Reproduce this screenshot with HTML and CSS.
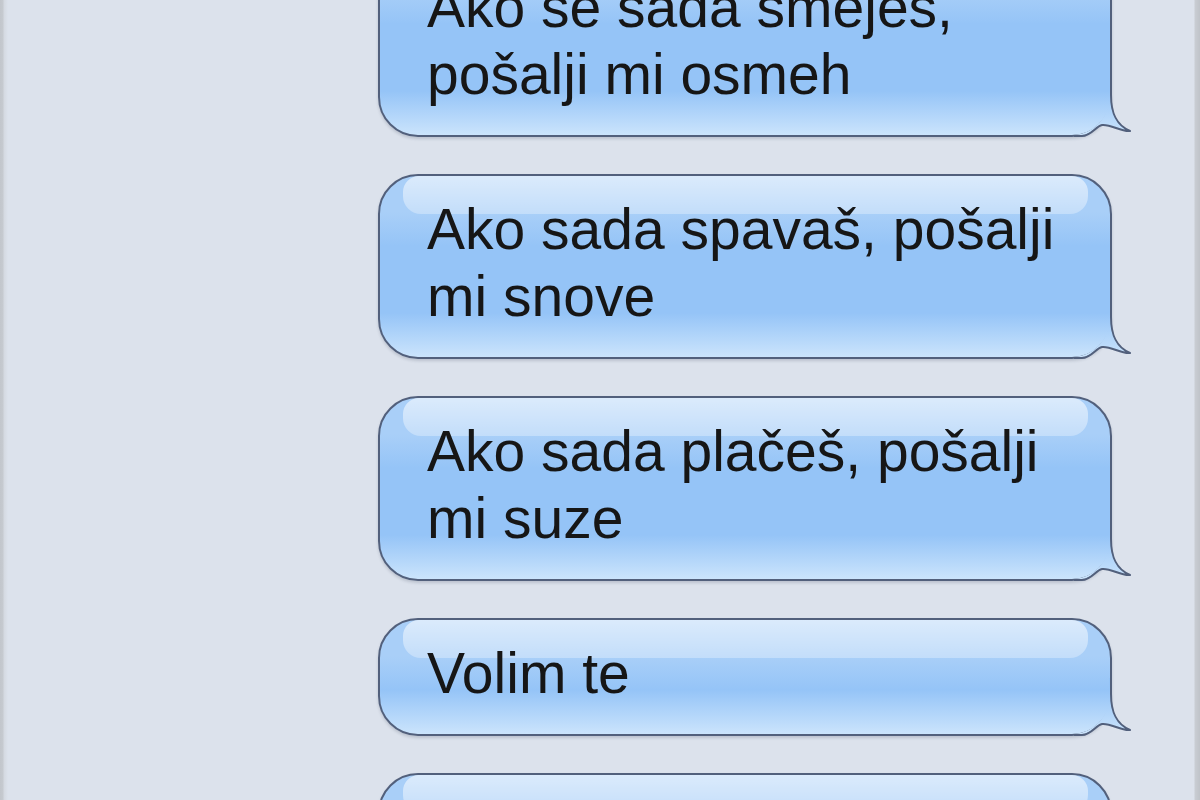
FILE: index.html
```html
<!DOCTYPE html>
<html lang="sr">
<head>
    <meta charset="UTF-8">
    <meta name="viewport" content="width=device-width, initial-scale=1.0">
    <title>Poruke</title>
    <link rel="stylesheet" href="styles.css">
</head>
<body>
    <div class="thread">
        <div class="bubble">
            <p>Ako se sada smeješ, pošalji mi osmeh</p>
            <svg class="tail" width="60" height="58" viewBox="0 0 60 58"><use href="#tail"/></svg>
        </div>
        <div class="bubble">
            <p>Ako sada spavaš, pošalji mi snove</p>
            <svg class="tail" width="60" height="58" viewBox="0 0 60 58"><use href="#tail"/></svg>
        </div>
        <div class="bubble">
            <p>Ako sada plačeš, pošalji mi suze</p>
            <svg class="tail" width="60" height="58" viewBox="0 0 60 58"><use href="#tail"/></svg>
        </div>
        <div class="bubble">
            <p>Volim te</p>
            <svg class="tail" width="60" height="58" viewBox="0 0 60 58"><use href="#tail"/></svg>
        </div>
        <div class="bubble">
            <p>Laku noć</p>
            <svg class="tail" width="60" height="58" viewBox="0 0 60 58"><use href="#tail"/></svg>
        </div>
    </div>

    <!-- shared tail shape for the bubbles -->
    <svg class="defs" width="0" height="0">
        <defs>
            <linearGradient id="tailFill" gradientUnits="userSpaceOnUse" x1="0" y1="12" x2="0" y2="56">
                <stop offset="0" stop-color="#95c4f7"/>
                <stop offset="1" stop-color="#cbe4fc"/>
            </linearGradient>
            <g id="tail">
                <path d="M37,0 L37,16 C37,34 42,46 56,52 C47,53 37,45 28,46 C22,47 17,56 8,56 L0,56 A37,37 0 0 0 35,18 L35,0 Z" fill="url(#tailFill)"/>
                <path d="M37,0 L37,16 C37,34 42,46 56,52 C47,53 37,45 28,46 C22,47 17,57 8,57 L0,57" fill="none" stroke="#52607c" stroke-width="2" stroke-linejoin="round"/>
            </g>
        </defs>
    </svg>
</body>
</html>
```

FILE: styles.css
```css
body {
    margin: 0;
    min-height: 100vh;
    overflow: hidden;
    font-family: "Liberation Sans", Arial, sans-serif;
    background: linear-gradient(to right, #c2c6cc 0, #c6cad0 3px, #d4d9e1 4px, #dce2ec 8px, #dce2ec calc(100% - 6px), #c9cdd3 calc(100% - 5px), #bfc3c9 100%);
}
.thread {
    display: flex;
    flex-direction: column;
    gap: 37px;
    margin-top: -48px;
    padding-left: 378px;
}
.bubble {
    position: relative;
    box-sizing: border-box;
    width: 734px;
    padding: 20px 23px 27px 47px;
    border: 2px solid #52607c;
    border-radius: 40px;
    background:
        linear-gradient(to bottom, rgba(203, 228, 252, 0) 0, #cbe4fc 100%) bottom / 100% 44px no-repeat,
        linear-gradient(to bottom, #a9cff8 36px, #95c4f7 70px);
    box-shadow: 0 2px 3px rgba(40, 50, 70, 0.18);
}
.bubble::before {
    content: "";
    position: absolute;
    top: 0;
    left: 23px;
    right: 22px;
    height: 38px;
    border-radius: 16px 16px 18px 18px;
    background: linear-gradient(to bottom, rgba(255, 255, 255, 0.58), rgba(255, 255, 255, 0.3));
}
.bubble p {
    position: relative;
    margin: 0;
    font-size: 57px;
    line-height: 67px;
    color: #161616;
}
.tail {
    position: absolute;
    right: -24px;
    bottom: -2px;
}
.defs {
    position: absolute;
}
```
